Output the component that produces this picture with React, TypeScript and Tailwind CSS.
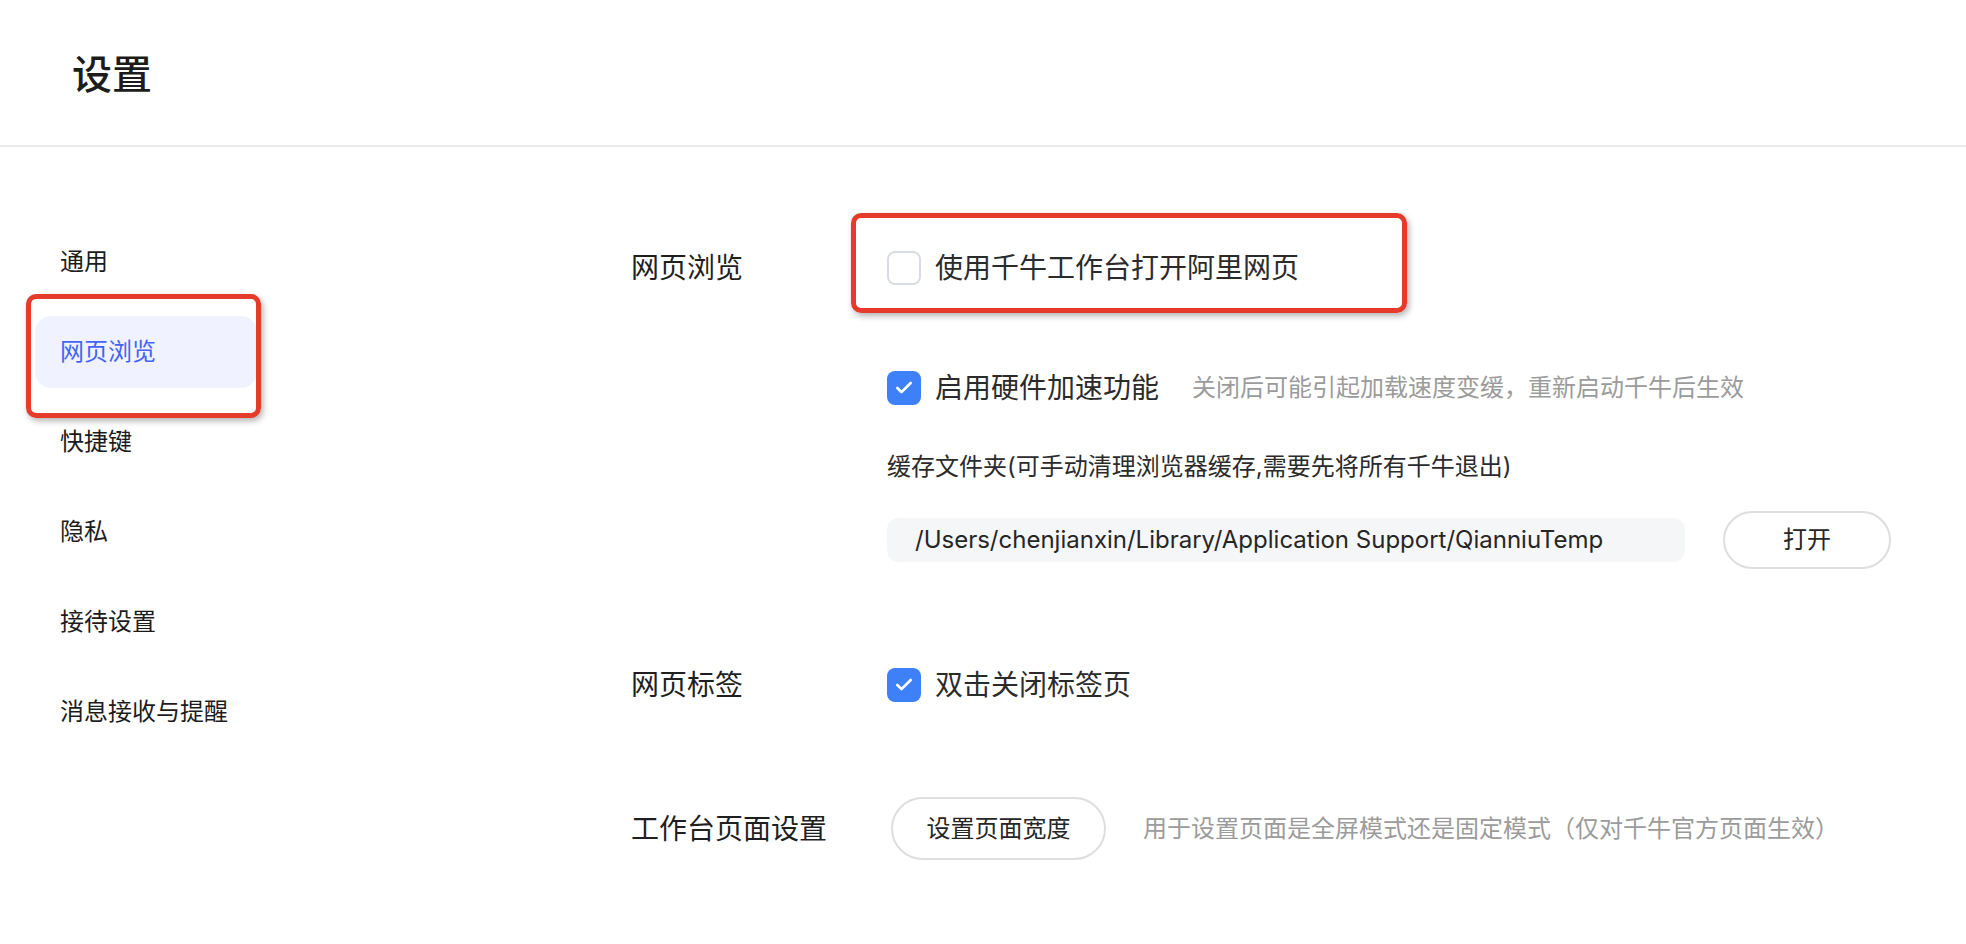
import { Check } from 'lucide-react';

const FONT = "font-['Inter','Noto_Sans_CJK_SC',sans-serif]";

const navItems = ['通用', '网页浏览', '快捷键', '隐私', '接待设置', '消息接收与提醒'];

function CheckBox({ checked }: { checked: boolean }) {
    if (checked) {
        return (
            <span className="flex h-[34px] w-[34px] shrink-0 items-center justify-center rounded-[8px] bg-[#3d80f8]">
                <Check className="h-[20px] w-[20px] text-white" strokeWidth={3.2} />
            </span>
        );
    }
    return <span className="h-[34px] w-[34px] shrink-0 rounded-[8px] border-2 border-[#d9dce2] bg-white" />;
}

function CheckRow({ checked, label, hint }: { checked: boolean; label: string; hint?: string }) {
    return (
        <div className="flex h-[34px] items-center">
            <CheckBox checked={checked} />
            <span className="ml-[14px] text-[28px] leading-none text-[#2b2b2b]">{label}</span>
            {hint && <span className="ml-[33px] text-[24px] leading-none text-[#9b9b9b]">{hint}</span>}
        </div>
    );
}

export default function App() {
    return (
        <div className={`relative min-h-[944px] w-full bg-white ${FONT}`}>
            {/* header */}
            <header className="flex h-[147px] items-center border-b-2 border-[#e9eaec] pl-[72px] pt-[4px]">
                <h1 className="text-[40px] font-medium leading-none text-[#1c1c1c]">设置</h1>
            </header>

            <div className="flex">
                {/* side nav */}
                <nav className="ml-[35px] flex w-[222px] flex-col gap-[18px] pt-[79px]">
                    {navItems.map((item) => (
                        <div
                            key={item}
                            className={`flex h-[72px] items-center rounded-[16px] pl-[25px] text-[24px] leading-none ${
                                item === '网页浏览' ? 'bg-[#f0f3ff] text-[#4563f5]' : 'text-[#1c1c1c]'
                            }`}
                        >
                            {item}
                        </div>
                    ))}
                </nav>

                {/* settings panel */}
                <main className="ml-[374px] flex flex-col pt-[104px]">
                    <section className="grid grid-cols-[256px_1fr] items-start">
                        <div className="flex h-[34px] items-center text-[28px] leading-none text-[#1f1f1f]">网页浏览</div>
                        <div className="flex flex-col">
                            <CheckRow checked={false} label="使用千牛工作台打开阿里网页" />
                            <div className="mt-[86px]">
                                <CheckRow checked label="启用硬件加速功能" hint="关闭后可能引起加载速度变缓，重新启动千牛后生效" />
                            </div>
                            <div className="mt-[45px] flex h-[34px] items-center text-[24px] leading-none text-[#2b2b2b]">
                                缓存文件夹(可手动清理浏览器缓存,需要先将所有千牛退出)
                            </div>
                            <div className="mt-[27px] flex h-[58px] items-center">
                                <div className="flex h-[44px] w-[798px] items-center rounded-[12px] bg-[#f5f6f8] pl-[28px] text-[24px] leading-none text-[#262626]">
                                    /Users/chenjianxin/Library/Application Support/QianniuTemp
                                </div>
                                <button className="ml-[38px] flex h-[58px] w-[168px] items-center justify-center rounded-full border-2 border-[#dedede] bg-white text-[24px] leading-none text-[#262626]">
                                    打开
                                </button>
                            </div>
                        </div>
                    </section>

                    <section className="mt-[99px] grid grid-cols-[256px_1fr] items-start">
                        <div className="flex h-[34px] items-center text-[28px] leading-none text-[#1f1f1f]">网页标签</div>
                        <CheckRow checked label="双击关闭标签页" />
                    </section>

                    <section className="mt-[95px] grid grid-cols-[256px_1fr] items-start">
                        <div className="flex h-[63px] items-center text-[28px] leading-none text-[#1f1f1f]">工作台页面设置</div>
                        <div className="flex h-[63px] items-center">
                            <button className="ml-[4px] flex h-[63px] w-[215px] items-center justify-center rounded-full border-2 border-[#dedede] bg-white text-[24px] leading-none text-[#262626]">
                                设置页面宽度
                            </button>
                            <span className="ml-[37px] text-[24px] leading-none text-[#9b9b9b]">
                                用于设置页面是全屏模式还是固定模式（仅对千牛官方页面生效）
                            </span>
                        </div>
                    </section>
                </main>
            </div>

            {/* highlight frames */}
            <div className="pointer-events-none absolute left-[26px] top-[294px] h-[124px] w-[235px] rounded-[10px] border-[5px] border-[#e63a2b] shadow-[2px_3px_6px_rgba(0,0,0,0.3)]" />
            <div className="pointer-events-none absolute left-[851px] top-[213px] h-[100px] w-[556px] rounded-[10px] border-[5px] border-[#e63a2b] shadow-[2px_3px_6px_rgba(0,0,0,0.3)]" />
        </div>
    );
}
